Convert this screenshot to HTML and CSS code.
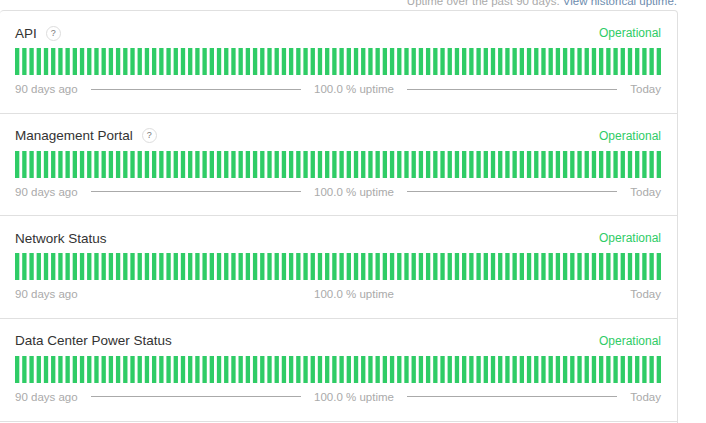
FILE: index.html
```html
<!DOCTYPE html>
<html lang="en">
<head>
<meta charset="utf-8">
<title>Uptime</title>
<link rel="stylesheet" href="styles.css">
</head>
<body>
<svg class="defs" width="0" height="0"><defs><g id="bars"></g></defs></svg>
<p class="caption">Uptime over the past 90 days. <a href="#">View historical uptime.</a></p>
<main class="card">
  <section class="row">
    <div class="head"><span class="name">API</span><span class="help">?</span><span class="state">Operational</span></div>
    <svg class="bars" viewBox="0 0 448 34" preserveAspectRatio="none"><use href="#bars"/></svg>
    <div class="foot"><span>90 days ago</span><i></i><span>100.0 % uptime</span><i></i><span>Today</span></div>
  </section>
  <section class="row">
    <div class="head"><span class="name">Management Portal</span><span class="help">?</span><span class="state">Operational</span></div>
    <svg class="bars" viewBox="0 0 448 34" preserveAspectRatio="none"><use href="#bars"/></svg>
    <div class="foot"><span>90 days ago</span><i></i><span>100.0 % uptime</span><i></i><span>Today</span></div>
  </section>
  <section class="row">
    <div class="head"><span class="name">Network Status</span><span class="state">Operational</span></div>
    <svg class="bars" viewBox="0 0 448 34" preserveAspectRatio="none"><use href="#bars"/></svg>
    <div class="foot"><span>90 days ago</span><span class="mid">100.0 % uptime</span><span>Today</span></div>
  </section>
  <section class="row">
    <div class="head"><span class="name">Data Center Power Status</span><span class="state">Operational</span></div>
    <svg class="bars" viewBox="0 0 448 34" preserveAspectRatio="none"><use href="#bars"/></svg>
    <div class="foot"><span>90 days ago</span><i></i><span>100.0 % uptime</span><i></i><span>Today</span></div>
  </section>
  <section class="row"></section>
</main>
<script src="bars.js"></script>
</body>
</html>
```
FILE: styles.css
```css
html, body { margin: 0; padding: 0; height: 423px; overflow: hidden; background: #fff; }
body { font-family: "Liberation Sans", Arial, sans-serif; color: #333; }
.defs { position: absolute; }
.caption { margin: -8px 29px 0 0; height: 18px; line-height: 18px; font-size: 11.5px; text-align: right; color: #aaa; }
.caption a { color: #6d8cae; text-decoration: none; }
.card { width: 678px; box-sizing: border-box; border: 1px solid #e0e0e0; border-left: 0; border-radius: 4px; }
.row { box-sizing: border-box; height: 102.67px; padding: 13px 16px 0 15px; border-bottom: 1px solid #e0e0e0; }
.head { display: flex; align-items: center; height: 18px; margin-bottom: 6px; }
.name { font-size: 13.5px; color: #333; }
.help { width: 13px; height: 13px; margin-left: 9px; border: 1px solid #ddd; border-radius: 50%; font-size: 9px; line-height: 13px; text-align: center; color: #777; }
.state { margin-left: auto; font-size: 12px; color: #2fcc66; }
.bars { display: block; width: 100%; height: 27px; }
.foot { display: flex; align-items: center; gap: 13px; margin-top: 8px; font-size: 11.5px; color: #aaa; }
.foot i { flex: 1; height: 1px; background: #aaa; }
.foot .mid { margin: 0 auto; }
```
FILE: bars.js
```js
var g = document.getElementById('bars');
for (var i = 0; i < 90; i++) {
  var r = document.createElementNS('http://www.w3.org/2000/svg', 'rect');
  r.setAttribute('x', i * 5);
  r.setAttribute('y', 0);
  r.setAttribute('width', 3);
  r.setAttribute('height', 34);
  r.setAttribute('fill', '#2fcc66');
  g.appendChild(r);
}
```
